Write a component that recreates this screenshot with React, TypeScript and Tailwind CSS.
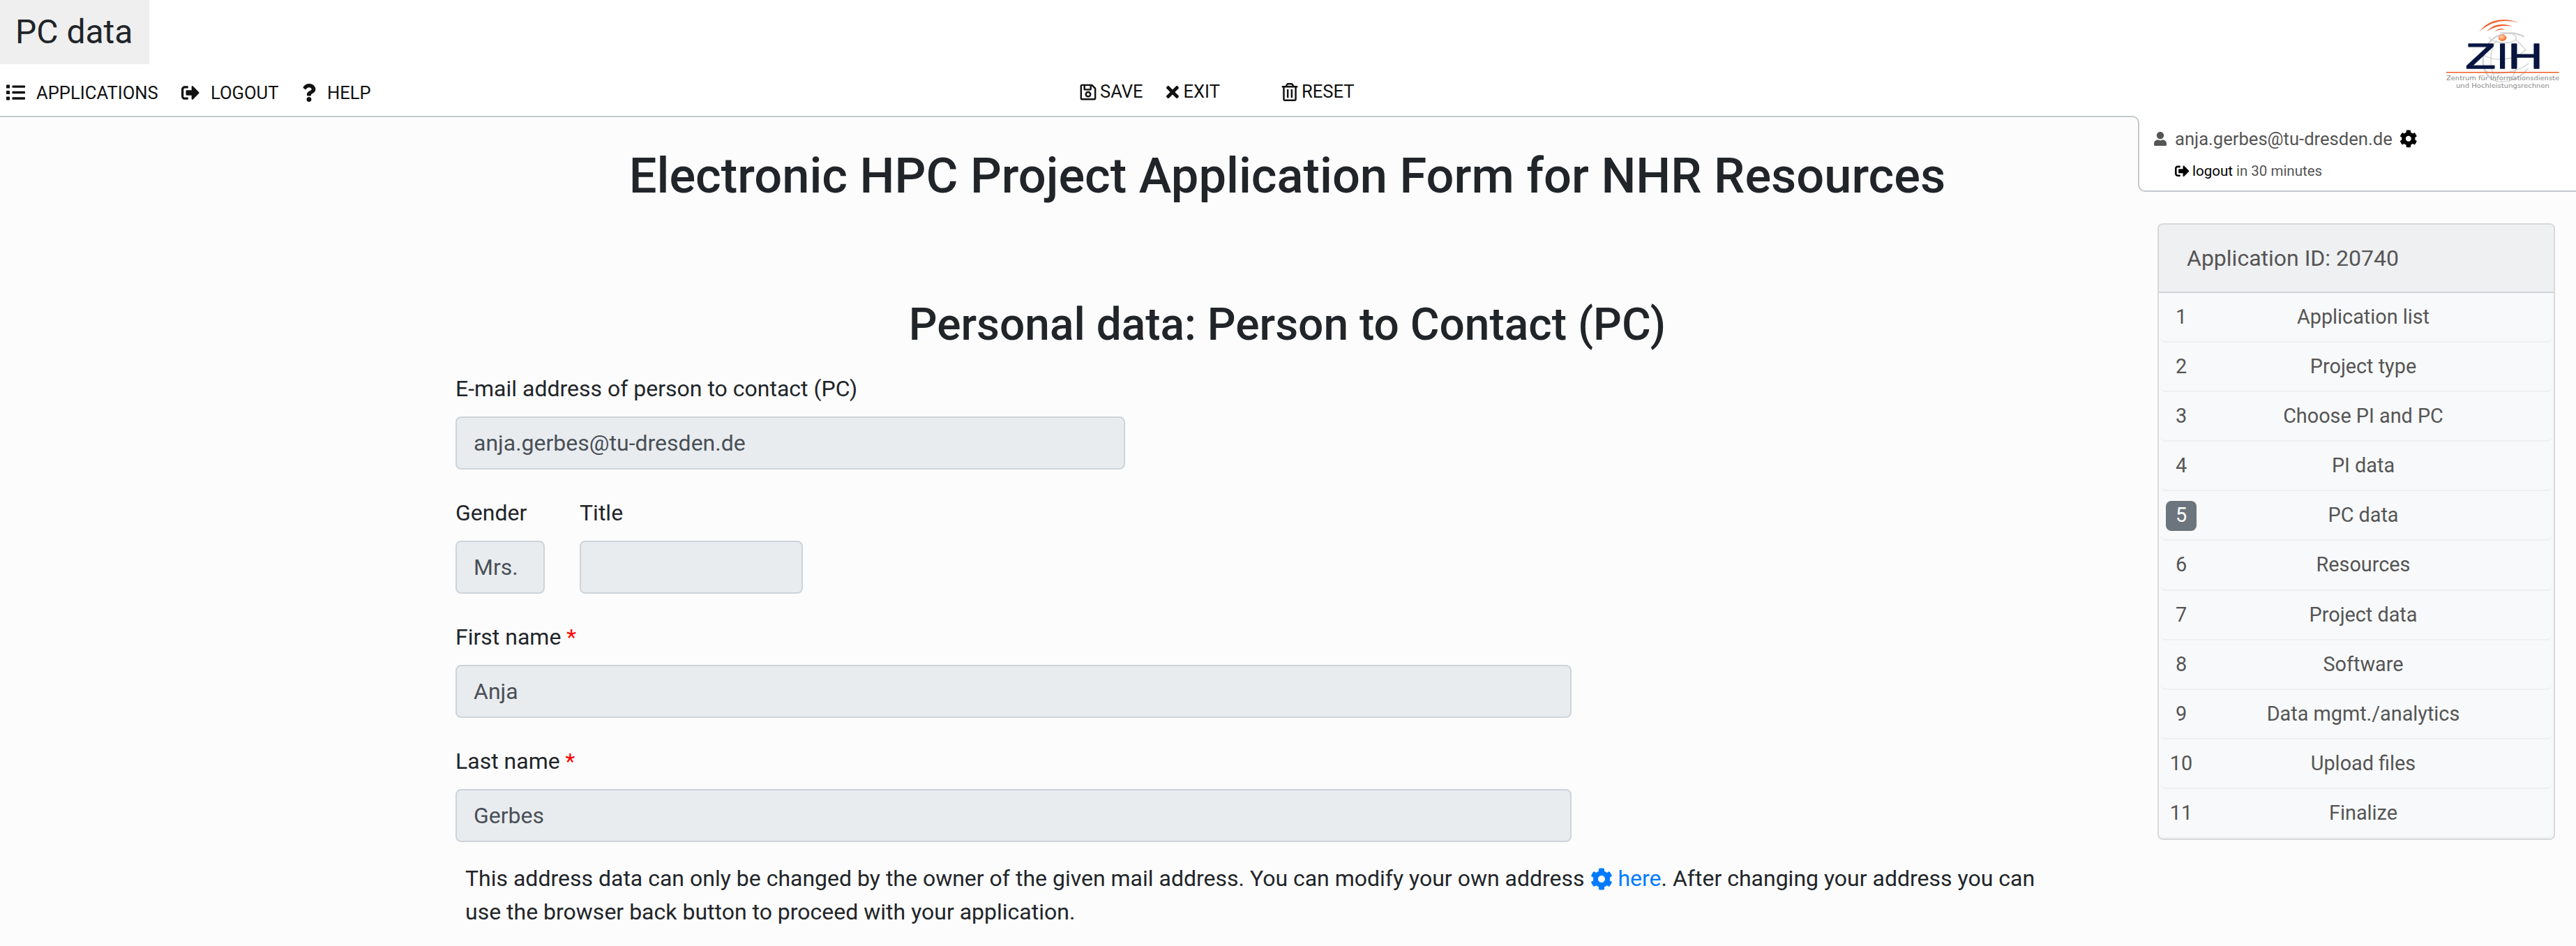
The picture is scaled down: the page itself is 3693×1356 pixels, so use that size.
import React from "react";
import {
  FaCog,
  FaList,
  FaQuestion,
  FaRegSave,
  FaRegTrashAlt,
  FaSignOutAlt,
  FaTimes,
  FaUser,
} from "react-icons/fa";

const steps = [
  "Application list",
  "Project type",
  "Choose PI and PC",
  "PI data",
  "PC data",
  "Resources",
  "Project data",
  "Software",
  "Data mgmt./analytics",
  "Upload files",
  "Finalize",
];

const currentStep = 5;

function Logo() {
  return (
    <svg width="213" height="130" viewBox="0 0 213 130" className="block">
      <defs>
        <radialGradient id="ball" cx="0.4" cy="0.35" r="0.7">
          <stop offset="0" stopColor="#ffd9bd" />
          <stop offset="0.6" stopColor="#f98a4b" />
          <stop offset="1" stopColor="#f0682a" />
        </radialGradient>
      </defs>
      <g fill="none" stroke="#cfcfcf" strokeWidth="1.3">
        <path d="M138.500 42.500C116 31 92 40 83 60C76 77 80 95 93 104" strokeWidth="2.2" />
        <path d="M88 43C94 54 124 54 127.500 45C128 39 116 36 104 37" />
        <path d="M80 69C96 79 126 77 141 61" />
        <path d="M84 92C100 100 132 92 145 81" />
        <path d="M99 48C88 62 88 88 99 107" />
        <path d="M120 54C132 72 130 92 117 107" />
        <path d="M127 47C135 54 138 60 142 62" />
        <path d="M93 104C108 112 132 104 144 88" />
      </g>
      <g fill="#f15a22">
        <path d="M74 35.500C88 18 108 14 131.500 22.500C108 17 92 20.500 74 35.500Z" />
        <path d="M85 35C95 24 108 23 121.500 27.500C108 26 97 27 85 35Z" />
        <path d="M96 35.500C102 30 106 30 112.500 32.500C106 32 102 32 96 35.500Z" />
      </g>
      <g
        fill="#081540"
        stroke="#081540"
        strokeWidth="1.3"
        strokeLinejoin="round"
        className="font-['Liberation_Sans']"
        fontSize="50"
      >
        <text transform="translate(54.500 88.300) scale(1.42 1)">Z</text>
        <text transform="translate(99.300 88.300) scale(1.2 1)">I</text>
        <text transform="translate(115.400 88.300) scale(1.38 1)">H</text>
      </g>
      <ellipse cx="107.500" cy="44.300" rx="5.800" ry="4.700" fill="url(#ball)" />
      <path d="M27 93.700H188.500" stroke="#f15a22" strokeWidth="1.500" />
      <g fill="#8b8b8b" className="font-['DejaVu_Sans']" fontSize="8.600">
        <text x="27" y="105" textLength="162" lengthAdjust="spacingAndGlyphs">
          Zentrum für Informationsdienste
        </text>
        <text x="41" y="115.700" textLength="134" lengthAdjust="spacingAndGlyphs">
          und Hochleistungsrechnen
        </text>
      </g>
    </svg>
  );
}

function Field({
  label,
  value = "",
  required = false,
  width,
}: {
  label: string;
  value?: string;
  required?: boolean;
  width: string;
}) {
  return (
    <div className={width}>
      <label className="block">
        {label}
        {required && <span className="text-[#ff0000]"> *</span>}
      </label>
      <div className="mt-4 flex h-[76px] items-center rounded-lg border-2 border-[#ced4da] bg-[#e9ecef] px-6 text-[#495057]">
        {value}
      </div>
    </div>
  );
}

export default function App() {
  return (
    <div className="h-[1356px] w-[3693px] overflow-hidden bg-[#fcfcfc] font-[Roboto,sans-serif] text-[32px] leading-[48px] text-[#212529]">
      <header className="flex h-[166px] justify-between bg-white">
        <div className="w-[1500px]">
          <div className="flex h-[92px] w-[214px] items-center bg-[#efefef] pl-[22px] text-[48px]">
            PC data
          </div>
          <nav className="mt-[20px] flex h-[41px] items-center text-[25.6px] leading-[41px] text-[#111]">
            <FaList className="ml-[9px] size-[27px]" />
            <span className="ml-[16px] w-[174px] pt-[2px]">APPLICATIONS</span>
            <FaSignOutAlt className="ml-[34px] size-[26px]" />
            <span className="ml-[16px] w-[98px] pt-[2px]">LOGOUT</span>
            <FaQuestion className="ml-[30px] size-[26px]" />
            <span className="ml-[13px] pt-[2px]">HELP</span>
          </nav>
        </div>
        <div className="mt-[111px] flex h-[41px] flex-1 items-center text-[25.6px] leading-[41px] text-[#111]">
          <FaRegSave className="ml-[46.5px] size-[26px]" />
          <span className="ml-[4.5px] w-[62px]">SAVE</span>
          <FaTimes className="ml-[29px] size-[26px]" />
          <span className="ml-[2.5px] w-[52px]">EXIT</span>
          <FaRegTrashAlt className="ml-[87.5px] size-[26px]" />
          <span className="ml-[4px]">RESET</span>
        </div>
        <div className="mt-[10px] w-[213px]">
          <Logo />
        </div>
      </header>

      <div className="flex">
        <div className="w-[3067px]">
          <div className="bg-white">
            <div className="h-[20px] rounded-tr-[10px] border-t-2 border-r-2 border-[#c3c8cc] bg-[#fcfcfc]" />
          </div>
          <main className="ml-[653px] w-[2385px] pt-[24px]">
            <h1 className="text-center text-[70.4px] leading-[84.5px] font-medium">
              Electronic HPC Project Application Form for NHR Resources
            </h1>
            <h2 className="mt-[133px] text-center text-[64px] leading-[76.8px] font-medium">
              Personal data: Person to Contact (PC)
            </h2>
            <form className="mt-[28.7px] flex flex-col gap-[38px]">
              <Field
                label="E-mail address of person to contact (PC)"
                value="anja.gerbes@tu-dresden.de"
                width="w-[960px]"
              />
              <div className="flex gap-[50px]">
                <Field label="Gender" value="Mrs." width="w-[128px]" />
                <Field label="Title" width="w-[320px]" />
              </div>
              <Field label="First name" value="Anja" required width="w-[1600px]" />
              <Field label="Last name" value="Gerbes" required width="w-[1600px]" />
            </form>
            <p className="mt-[28px] ml-[14px] w-[2300px]">
              This address data can only be changed by the owner of the given mail address. You can
              modify your own address{" "}
              <a className="text-[#007bff]">
                <FaCog className="-mt-1 inline size-8" /> here
              </a>
              . After changing your address you can
              <br />
              use the browser back button to proceed with your application.
            </p>
          </main>
        </div>

        <aside className="-ml-[2px] w-[628px] text-[#555]">
          <div className="ml-[2px] h-[20px] bg-white" />
          <div className="h-[89px] rounded-bl-[10px] border-b-2 border-l-2 border-[#c3c8cc] bg-white pl-[21px]">
            <div className="flex h-[26px] items-center text-[25.6px]">
              <FaUser className="h-[20.5px] w-[18px]" />
              <span className="ml-[12px]">anja.gerbes@tu-dresden.de</span>
              <FaCog className="ml-[10px] size-[25.6px] text-black" />
            </div>
            <div className="mt-[22px] ml-[29.5px] flex h-[22px] items-center text-[20.5px]">
              <FaSignOutAlt className="size-[20.5px] text-black" />
              <span className="ml-[5px] text-black">logout</span>
              <span className="ml-[5px]">in 30 minutes</span>
            </div>
          </div>

          <section className="mt-[45px] ml-[28px] w-[570px] overflow-hidden rounded-lg border-2 border-[#d7d9db] bg-[#f8f9fa]">
            <div className="flex h-[98px] items-center border-b-2 border-[#d0d3d5] bg-[#eff0f2] pl-[40px] text-[32px]">
              Application ID: 20740
            </div>
            <ol className="px-[2px] text-[28.8px] leading-[43.2px]">
              {steps.map((step, i) => (
                <li
                  key={step}
                  className="flex h-[71.1px] items-center rounded-b-lg border-b-2 border-[#eeeff1] pl-[8px]"
                >
                  <span
                    className={
                      i + 1 === currentStep
                        ? "mt-[2px] flex h-[43px] w-[44px] items-center justify-center rounded-lg bg-[#6c757d] pb-[2px] text-white"
                        : "flex h-[43px] w-[44px] items-center justify-center"
                    }
                  >
                    {i + 1}
                  </span>
                  <span className="w-[478px] text-center">{step}</span>
                </li>
              ))}
            </ol>
          </section>
        </aside>
      </div>
    </div>
  );
}
